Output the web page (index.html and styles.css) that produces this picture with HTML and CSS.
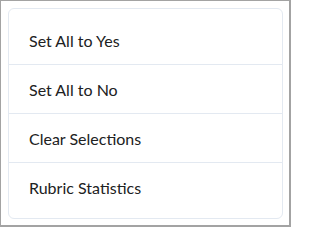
FILE: index.html
```html
<!DOCTYPE html>
<html>
<head>
<meta charset="utf-8">
<link rel="stylesheet" href="styles.css">
</head>
<body>
<div class="frame">
  <ul class="menu">
    <li class="item">Set All to Yes</li>
    <li class="item">Set All to No</li>
    <li class="item">Clear Selections</li>
    <li class="item">Rubric Statistics</li>
  </ul>
</div>
</body>
</html>
```
FILE: styles.css
```css
html, body {
  margin: 0;
  padding: 0;
  background: #ffffff;
}
.frame {
  box-sizing: border-box;
  width: 291px;
  height: 227px;
  border-style: solid;
  border-color: #a3a3a3;
  border-width: 1px 2px 2px 1px;
  padding: 7px 6px 6px 7px;
  background: #ffffff;
}
.menu {
  box-sizing: border-box;
  list-style: none;
  margin: 0;
  padding: 7px 0;
  width: 275px;
  height: 211px;
  border: 1px solid #e3e9f1;
  border-radius: 6px;
  background: #ffffff;
  display: flex;
  flex-direction: column;
}
.item {
  height: 48px;
  display: flex;
  align-items: center;
  padding: 0 20px;
  font-family: Lato, "Noto Sans", sans-serif;
  font-size: 16px;
  color: #202122;
  border-bottom: 1px solid #e3e9f1;
}
.item:last-child {
  border-bottom: none;
}
```
